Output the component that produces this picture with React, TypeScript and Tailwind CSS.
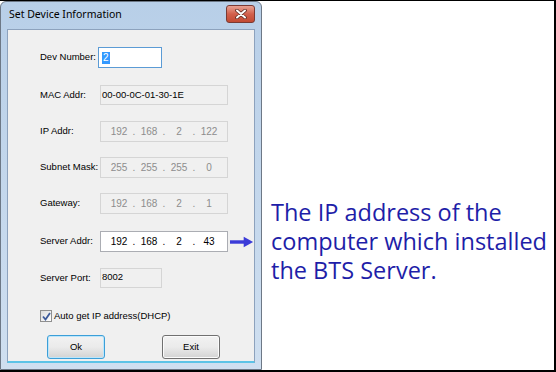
const UI_FONT = "font-['Liberation_Sans',Arial,sans-serif]";

function IpBox({ parts, enabled }: { parts: string[]; enabled?: boolean }) {
  return (
    <div
      className={`flex items-center w-[128px] h-[21px] border ${
        enabled ? "bg-white border-[#abadb3] text-black" : "bg-[#f0f0f0] border-[#d5d5d5] text-[#8d8d8d]"
      } text-[10px] px-[6px]`}
    >
      {parts.map((p, i) => (
        <div key={i} className="flex items-center">
          {i > 0 && <span className="w-[6px] text-center">.</span>}
          <span className="w-[24px] text-center">{p}</span>
        </div>
      ))}
    </div>
  );
}

function Row({ label, children, mt }: { label: string; children: React.ReactNode; mt: string }) {
  return (
    <div className={`flex items-center ${mt}`}>
      <span className="w-[60px] shrink-0 text-[9.5px] text-black whitespace-nowrap">{label}</span>
      {children}
    </div>
  );
}

export default function App() {
  return (
    <div className={`w-[556px] h-[372px] bg-white border-t border-r-2 border-b-2 border-black flex ${UI_FONT}`}>
      {/* dialog window */}
      <div className="w-[262px] h-full shrink-0 flex flex-col border border-[#6d7886] rounded-t-[6px] bg-gradient-to-b from-[#b8cfe8] to-[#cfdff0] px-[6px] pb-[6px]">
        <div className="h-[27px] flex items-center justify-between pl-[2px]">
          <span className="text-[10.5px] text-black font-['Noto_Sans',sans-serif] -mt-[1px]">Set Device Information</span>
          <div className="w-[29px] h-[18px] -mt-[4px] rounded-[3px] border border-[#7a3a33] bg-gradient-to-b from-[#e8a293] via-[#d2604c] to-[#c24a33] flex items-center justify-center">
            <svg width="12" height="10" viewBox="0 0 12 10">
              <path d="M2 1.5 L10 8.5 M10 1.5 L2 8.5" stroke="#5a2a22" strokeWidth="3.6" strokeLinecap="round" />
              <path d="M2 1.5 L10 8.5 M10 1.5 L2 8.5" stroke="#ffffff" strokeWidth="2" strokeLinecap="round" />
            </svg>
          </div>
        </div>
        <div className="flex-1 bg-[#f0f0f0] border border-[#8da2bd] border-b-2 border-b-[#5cc3e6] pl-[32px] pt-[17px] flex flex-col">
          <Row label="Dev Number:" mt="">
            <div className="-ml-[2px] w-[64px] h-[21px] bg-white border border-[#5b9bd5] flex items-center pl-[3px]">
              <span className="bg-[#3399ff] text-white text-[10px] leading-[12px] px-[1px]">2</span>
            </div>
          </Row>
          <Row label="MAC Addr:" mt="mt-[17px]">
            <div className="w-[128px] h-[20px] bg-[#f0f0f0] border border-[#d5d5d5] text-[9.5px] text-black pl-[1px] flex items-center">
              00-00-0C-01-30-1E
            </div>
          </Row>
          <Row label="IP Addr:" mt="mt-[16px]">
            <IpBox parts={["192", "168", "2", "122"]} />
          </Row>
          <Row label="Subnet Mask:" mt="mt-[15px]">
            <IpBox parts={["255", "255", "255", "0"]} />
          </Row>
          <Row label="Gateway:" mt="mt-[15px]">
            <IpBox parts={["192", "168", "2", "1"]} />
          </Row>
          <Row label="Server Addr:" mt="mt-[16px]">
            <div className="h-[23px] flex items-center">
              <IpBox parts={["192", "168", "2", "43"]} enabled />
            </div>
            <svg className="ml-[2px]" width="28" height="14" viewBox="0 0 28 14">
              <rect x="0" y="5" width="17" height="4" fill="#3b3bd8" />
              <path d="M16 1 L27 7 L16 13 Z" fill="#3b3bd8" />
            </svg>
          </Row>
          <Row label="Server Port:" mt="mt-[15px]">
            <div className="w-[62px] h-[20px] bg-[#f0f0f0] border border-[#d5d5d5] text-[9.5px] text-black pl-[1px] flex items-start pt-[1px]">
              8002
            </div>
          </Row>
          <div className="flex items-center mt-[21px]">
            <div className="w-[12px] h-[12px] border border-[#8f8f8f] bg-gradient-to-br from-[#dcdcdc] to-[#ffffff] flex items-center justify-center">
              <svg width="9" height="9" viewBox="0 0 9 9">
                <path d="M1 4.5 L3.5 7.5 L8 1" stroke="#3d5a9a" strokeWidth="1.8" fill="none" />
              </svg>
            </div>
            <span className="ml-[2px] text-[9.5px] text-black">Auto get IP address(DHCP)</span>
          </div>
          <div className="flex mt-[12px] ml-[7px] gap-[57px]">
            <div className="w-[58px] h-[24px] rounded-[3px] border border-[#3c9fd8] bg-gradient-to-b from-[#f2f2f2] via-[#ebebeb] to-[#d3d3d3] flex items-center justify-center text-[9.5px] text-black shadow-[inset_0_0_0_1px_#bde6fb]">
              Ok
            </div>
            <div className="w-[58px] h-[24px] rounded-[3px] border border-[#707070] bg-gradient-to-b from-[#f2f2f2] via-[#ebebeb] to-[#d3d3d3] flex items-center justify-center text-[9.5px] text-black shadow-[inset_0_0_0_1px_#fbfbfb]">
              Exit
            </div>
          </div>
        </div>
      </div>
      {/* annotation */}
      <div className="flex-1 flex items-start pl-[9px] pt-[197px]">
        <p className="text-[23.5px] leading-[29px] text-[#1e1ea8] font-['Open_Sans',sans-serif] whitespace-nowrap">
          The IP address of the
          <br />
          computer which installed
          <br />
          the BTS Server.
        </p>
      </div>
    </div>
  );
}
